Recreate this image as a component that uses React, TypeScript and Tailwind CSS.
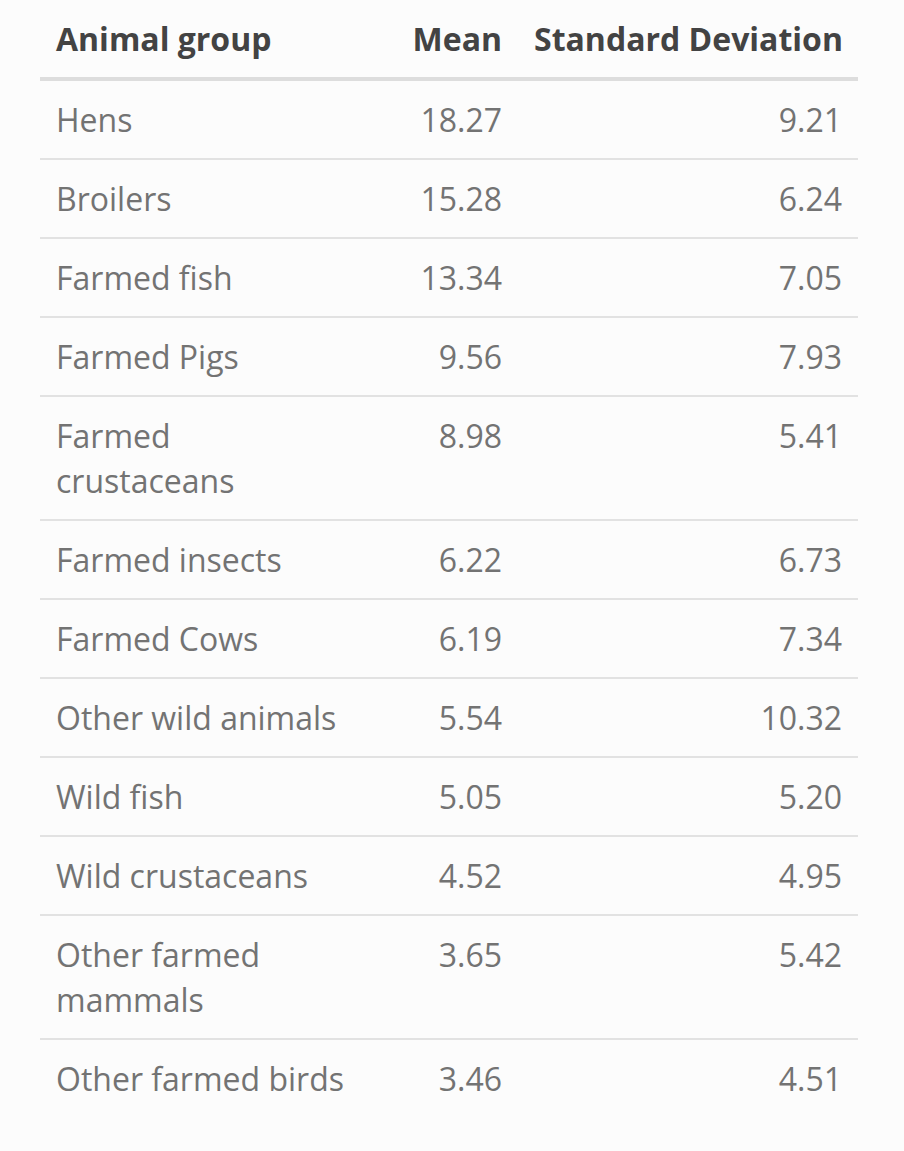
import React from "react";

const rows: [string, string, string][] = [
  ["Hens", "18.27", "9.21"],
  ["Broilers", "15.28", "6.24"],
  ["Farmed fish", "13.34", "7.05"],
  ["Farmed Pigs", "9.56", "7.93"],
  ["Farmed crustaceans", "8.98", "5.41"],
  ["Farmed insects", "6.22", "6.73"],
  ["Farmed Cows", "6.19", "7.34"],
  ["Other wild animals", "5.54", "10.32"],
  ["Wild fish", "5.05", "5.20"],
  ["Wild crustaceans", "4.52", "4.95"],
  ["Other farmed mammals", "3.65", "5.42"],
  ["Other farmed birds", "3.46", "4.51"],
];

export default function App() {
  return (
    <div
      className="min-h-[1151px] w-full bg-[#fcfcfc] pl-[40px] pr-[46px]"
      style={{ fontFamily: '"Open Sans", "Noto Sans", sans-serif' }}
    >
      <table className="w-[818px] table-fixed border-collapse text-[32px] leading-[45px]">
        <colgroup>
          <col className="w-[322px]" />
          <col className="w-[156px]" />
          <col className="w-[340px]" />
        </colgroup>
        <thead>
          <tr className="border-b-4 border-[#dddddd]">
            <th className="px-4 py-4 text-left align-top font-bold text-[#434343]">Animal group</th>
            <th className="px-4 py-4 text-right align-top font-bold text-[#434343]">Mean</th>
            <th className="px-4 py-4 text-right align-top font-bold text-[#434343] whitespace-nowrap">Standard Deviation</th>
          </tr>
        </thead>
        <tbody>
          {rows.map(([name, mean, sd], i) => (
            <tr
              key={name}
              className={i < rows.length - 1 ? "border-b-2 border-[#e2e2e2]" : ""}
            >
              <td className="px-4 py-4 text-left align-top text-[#737373]">{name}</td>
              <td className="px-4 py-4 text-right align-top text-[#737373]">{mean}</td>
              <td className="px-4 py-4 text-right align-top text-[#737373]">{sd}</td>
            </tr>
          ))}
        </tbody>
      </table>
    </div>
  );
}
